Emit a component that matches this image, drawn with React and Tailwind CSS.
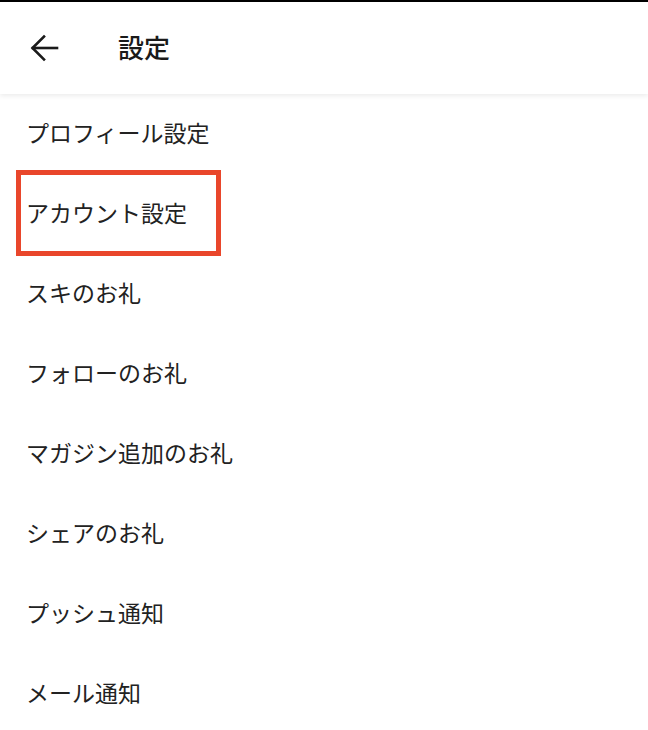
import React from "react";

const items = [
  "プロフィール設定",
  "アカウント設定",
  "スキのお礼",
  "フォローのお礼",
  "マガジン追加のお礼",
  "シェアのお礼",
  "プッシュ通知",
  "メール通知",
];

const BackArrow = () => (
  <svg width="30" height="28" viewBox="0 0 30 28" fill="none" stroke="#1a1a1a" strokeWidth="2.6" strokeLinecap="square">
    <path d="M28 14H4" />
    <path d="M15 2.5L3.5 14L15 25.5" />
  </svg>
);

export default function App() {
  return (
    <div
      className="w-[648px] h-[730px] bg-white overflow-hidden border-t-2 border-black"
      style={{ fontFamily: '"Noto Sans CJK JP", "Noto Sans", sans-serif' }}
    >
      <header className="relative z-10 h-[92px] flex items-center bg-white shadow-[0_2px_5px_rgba(0,0,0,0.08)]">
        <button className="w-[118px] shrink-0 pl-[29px] h-full flex items-center">
          <BackArrow />
        </button>
        <h1 className="text-[26px] font-medium text-[#1a1a1a] leading-none -mt-[3px]">設定</h1>
      </header>

      <ul>
        {items.map((label, i) => (
          <li key={label} className="relative h-[80px] flex items-center pl-[26px]">
            <span className="text-[23px] text-[#222] leading-none -mt-[3px]">{label}</span>
            {i === 1 && (
              <div className="absolute left-[16px] top-[-4px] w-[205px] h-[86px] border-[5px] border-[#e9462b]" />
            )}
          </li>
        ))}
      </ul>
    </div>
  );
}
